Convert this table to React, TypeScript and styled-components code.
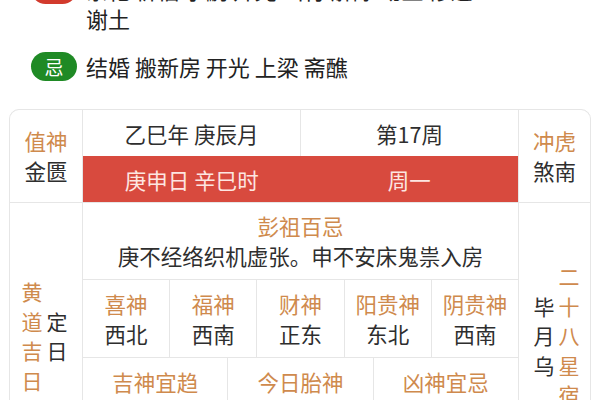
import React from "react";
import styled, { createGlobalStyle } from "styled-components";

const ORANGE = "#cf8a4d";
const DARK = "#2e2e2e";
const LINE = "#e6e6e6";

const GlobalStyle = createGlobalStyle`
  html, body { margin: 0; padding: 0; background: #ffffff; }
  body {
    font-family: "Noto Sans CJK SC", "Noto Sans", sans-serif;
    color: ${DARK};
  }
`;

const Page = styled.div`
  width: 600px;
  box-sizing: border-box;
  padding: 0 9px;
`;

const YiJiList = styled.div`
  margin-top: -25px;
  padding-left: 22px;
  display: flex;
  flex-direction: column;
  gap: 19px;
`;

const YiJiRow = styled.div`
  display: flex;
  align-items: flex-start;
  gap: 9px;
`;

const Badge = styled.span<{ $tone: "red" | "green" }>`
  flex: 0 0 46px;
  height: 29px;
  border-radius: 15px;
  background: ${(p) => (p.$tone === "red" ? "#d23a2d" : "#1f8a25")};
  color: #ffffff;
  font-size: 19px;
  line-height: 29px;
  text-align: center;
`;

const YiJiText = styled.div`
  width: 400px;
  font-size: 22px;
  line-height: 29px;
  color: #222222;
  word-break: keep-all;
`;

const Table = styled.div`
  margin-top: 28px;
  display: grid;
  grid-template-columns: 72px 435px 71px;
  grid-template-rows: 92px auto;
  gap: 1px;
  background: ${LINE};
  border: 1px solid ${LINE};
  border-radius: 10px;
  overflow: hidden;
`;

const SideCell = styled.div`
  background: #ffffff;
  display: flex;
  flex-direction: column;
  align-items: center;
  justify-content: center;
  font-size: 21.5px;
  line-height: 30px;
`;

const Label = styled.span`
  color: ${ORANGE};
`;

const Value = styled.span`
  color: ${DARK};
`;

const DateBlock = styled.div`
  display: grid;
  grid-template-columns: 1fr 1fr;
  grid-template-rows: 46px 46px;
  column-gap: 1px;
  background: ${LINE};
`;

const DateTop = styled.div`
  background: #ffffff;
  display: flex;
  align-items: center;
  justify-content: center;
  font-size: 21.5px;
  color: ${DARK};
`;

const RedBand = styled.div`
  grid-column: 1 / 3;
  background: #d84a3e;
  display: grid;
  grid-template-columns: 1fr 1fr;
`;

const RedItem = styled.div`
  display: flex;
  align-items: center;
  justify-content: center;
  font-size: 21.5px;
  color: #fde6e1;
`;

const VerticalGroup = styled.div<{ $shift: number }>`
  background: #ffffff;
  display: flex;
  align-items: center;
  justify-content: center;
  gap: 4px;
  padding-left: ${(p) => (p.$shift > 0 ? p.$shift : 0)}px;
  padding-right: ${(p) => (p.$shift < 0 ? -p.$shift : 0)}px;
`;

const VerticalText = styled.div<{ $orange?: boolean }>`
  width: 21px;
  font-size: 21px;
  line-height: 29.5px;
  word-break: break-all;
  color: ${(p) => (p.$orange ? ORANGE : DARK)};
  text-align: center;
`;

const MiddleStack = styled.div`
  display: flex;
  flex-direction: column;
  gap: 1px;
  background: ${LINE};
`;

const PengZu = styled.div`
  background: #ffffff;
  height: 76px;
  display: flex;
  flex-direction: column;
  align-items: center;
  justify-content: center;
  font-size: 21.5px;
  line-height: 30px;
`;

const ShenGrid = styled.div<{ $cols: number }>`
  display: grid;
  grid-template-columns: repeat(${(p) => p.$cols}, 1fr);
  gap: 1px;
`;

const ShenCell = styled.div`
  background: #ffffff;
  height: 77px;
  display: flex;
  flex-direction: column;
  align-items: center;
  justify-content: center;
  font-size: 21.5px;
  line-height: 30px;
`;

const DetailCell = styled.div`
  background: #ffffff;
  height: 111px;
  box-sizing: border-box;
  padding: 9px 8px 0;
  display: flex;
  flex-direction: column;
  align-items: center;
  font-size: 21.5px;
  line-height: 30px;
  text-align: center;
`;

const shen = [
  ["喜神", "西北"],
  ["福神", "西南"],
  ["财神", "正东"],
  ["阳贵神", "东北"],
  ["阴贵神", "西南"],
];

const details = [
  ["吉神宜趋", "月恩 四相 时德 民日"],
  ["今日胎神", "碓磨厕 外东南"],
  ["凶神宜忌", "五虚 九空 土府 往亡"],
];

export default function App() {
  return (
    <>
      <GlobalStyle />
      <Page>
        <YiJiList>
          <YiJiRow>
            <Badge $tone="red">宜</Badge>
            <YiJiText>祭祀 祈福 求嗣 开光 出行 解除 动土 修造 谢土</YiJiText>
          </YiJiRow>
          <YiJiRow>
            <Badge $tone="green">忌</Badge>
            <YiJiText>结婚 搬新房 开光 上梁 斋醮</YiJiText>
          </YiJiRow>
        </YiJiList>

        <Table>
          <SideCell>
            <Label>值神</Label>
            <Value>金匮</Value>
          </SideCell>
          <DateBlock>
            <DateTop>乙巳年 庚辰月</DateTop>
            <DateTop>第17周</DateTop>
            <RedBand>
              <RedItem>庚申日 辛巳时</RedItem>
              <RedItem>周一</RedItem>
            </RedBand>
          </DateBlock>
          <SideCell>
            <Label>冲虎</Label>
            <Value>煞南</Value>
          </SideCell>

          <VerticalGroup $shift={-3}>
            <VerticalText $orange>黄道吉日</VerticalText>
            <VerticalText>定日</VerticalText>
          </VerticalGroup>
          <MiddleStack>
            <PengZu>
              <Label>彭祖百忌</Label>
              <Value>庚不经络织机虚张。申不安床鬼祟入房</Value>
            </PengZu>
            <ShenGrid $cols={5}>
              {shen.map(([l, v]) => (
                <ShenCell key={l}>
                  <Label>{l}</Label>
                  <Value>{v}</Value>
                </ShenCell>
              ))}
            </ShenGrid>
            <ShenGrid $cols={3}>
              {details.map(([l, v]) => (
                <DetailCell key={l}>
                  <Label>{l}</Label>
                  <Value>{v}</Value>
                </DetailCell>
              ))}
            </ShenGrid>
          </MiddleStack>
          <VerticalGroup $shift={4}>
            <VerticalText>毕月乌</VerticalText>
            <VerticalText $orange>二十八星宿</VerticalText>
          </VerticalGroup>
        </Table>
      </Page>
    </>
  );
}
